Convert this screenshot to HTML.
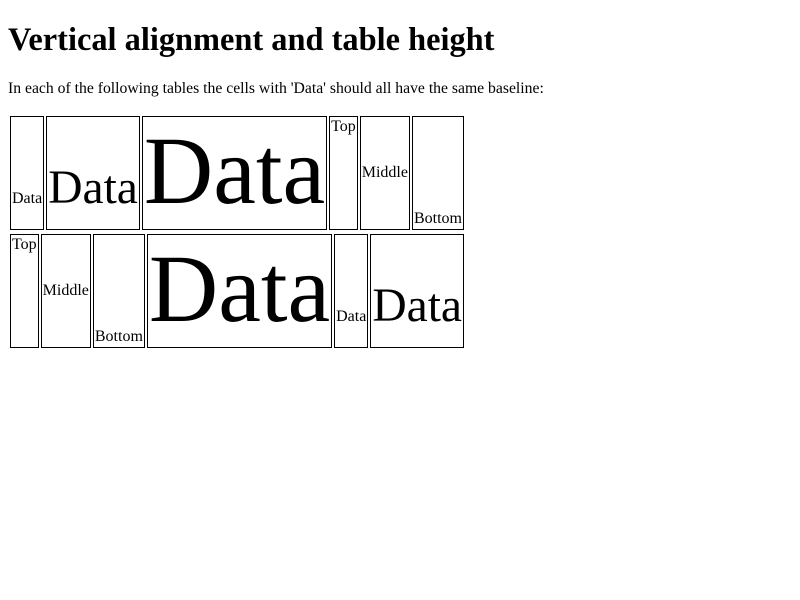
<!DOCTYPE html>
<html><head><style>
body{margin:8px;font-family:"Liberation Serif",serif;font-size:15.7px;background:#fff;color:#000}
h1{font-size:32.4px;margin:22px 0 21px 0;line-height:37px}
p{margin:16px 0 16px 0}
table{border-spacing:2px;font-size:16px}
td{border:1px solid #000;padding:1px;vertical-align:baseline;height:110px;line-height:normal}
.m{font-size:47.5px}.l{font-size:96px;line-height:106px}
.t{vertical-align:top}.mi{vertical-align:middle}.b{vertical-align:bottom}
</style></head><body>
<h1>Vertical alignment and table height</h1>
<p>In each of the following tables the cells with 'Data' should all have the same baseline:</p>
<table><tr><td>Data</td><td class="m">Data</td><td class="l">Data</td><td class="t">Top</td><td class="mi">Middle</td><td class="b">Bottom</td></tr></table>
<table><tr><td class="t">Top</td><td class="mi">Middle</td><td class="b">Bottom</td><td class="l">Data</td><td>Data</td><td class="m">Data</td></tr></table>
</body></html>
